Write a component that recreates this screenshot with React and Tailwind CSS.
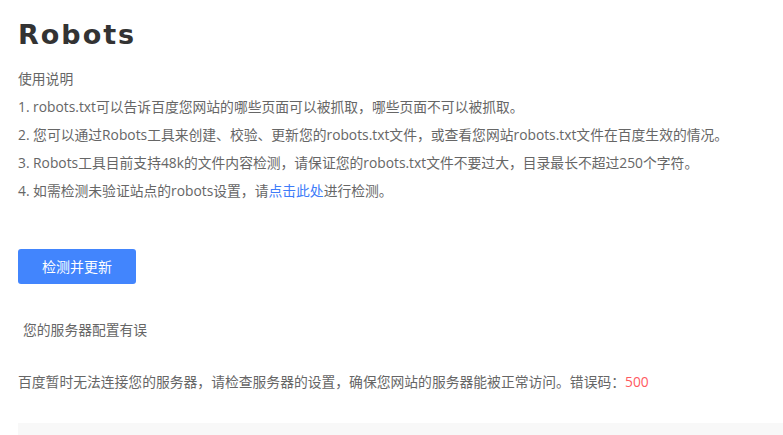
export default function App() {
  const font = { fontFamily: '"Open Sans", "Noto Sans CJK SC", sans-serif' };
  return (
    <div className="w-[783px] h-[435px] overflow-hidden bg-white pl-[18px]" style={font}>
      <h1 className="pt-[18px] text-[27px] leading-[34px] font-bold tracking-[2px] text-[#333]" style={{ fontFamily: '"DejaVu Sans", sans-serif' }}>
        Robots
      </h1>
      <div className="mt-[13px] text-[13.8px] leading-[28px] text-[#666]">
        <div>使用说明</div>
        <div>1. robots.txt可以告诉百度您网站的哪些页面可以被抓取，哪些页面不可以被抓取。</div>
        <div>2. 您可以通过Robots工具来创建、校验、更新您的robots.txt文件，或查看您网站robots.txt文件在百度生效的情况。</div>
        <div>3. Robots工具目前支持48k的文件内容检测，请保证您的robots.txt文件不要过大，目录最长不超过250个字符。</div>
        <div>4. 如需检测未验证站点的robots设置，请<span className="text-[#3d7cf9]">点击此处</span>进行检测。</div>
      </div>
      <button className="mt-[44px] w-[118px] h-[35px] rounded-[3px] bg-[#4285fd] text-white text-[14px]">检测并更新</button>
      <div className="mt-[36px] pl-[5px] text-[13.8px] leading-[20px] text-[#666]">您的服务器配置有误</div>
      <div className="mt-[32px] text-[13.8px] leading-[20px] text-[#666]">
        百度暂时无法连接您的服务器，请检查服务器的设置，确保您网站的服务器能被正常访问。错误码：<span className="text-[#ff5a5f]">500</span>
      </div>
      <div className="mt-[31px] h-[40px] bg-[#f8f8f8]"></div>
    </div>
  );
}
